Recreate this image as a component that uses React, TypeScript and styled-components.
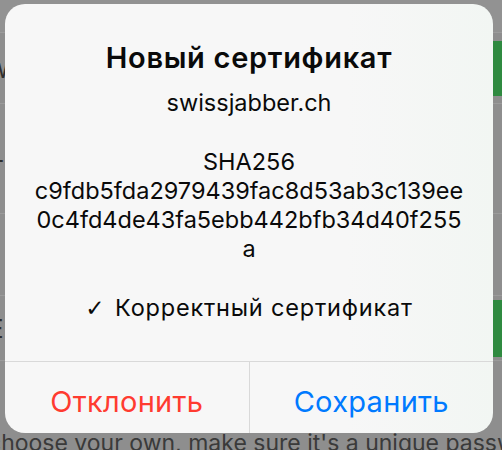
import styled, { createGlobalStyle } from "styled-components";

const GlobalStyle = createGlobalStyle`
  html, body {
    margin: 0;
    padding: 0;
  }
  body {
    width: 502px;
    height: 450px;
    overflow: hidden;
    font-family: Inter, "Liberation Sans", sans-serif;
  }
`;

const Screen = styled.div`
  position: relative;
  width: 502px;
  height: 450px;
  overflow: hidden;
  background: #8e8e8e;
`;

const Page = styled.div`
  display: flex;
  flex-direction: column;
`;

const Header = styled.div`
  height: 32px;
  background: #929292;
  border-bottom: 1px solid #9c9c9c;
`;

const Row = styled.div<{ $height: number }>`
  height: ${(p) => p.$height}px;
  display: flex;
  align-items: center;
  justify-content: space-between;
  border-bottom: 1px solid #9b9b9b;
  box-sizing: border-box;
`;

const Label = styled.span`
  margin-left: -12px;
  font-size: 26px;
  color: #2e2e2e;
`;

const GreenButton = styled.div<{ $height: number }>`
  width: 90px;
  height: ${(p) => p.$height}px;
  background: #2f8a40;
  flex-shrink: 0;
`;

const Footer = styled.div`
  display: flex;
  flex-direction: column;
  padding-top: 31px;
  font-size: 23px;
  line-height: 34px;
  color: #3a3a3a;
  white-space: nowrap;
`;

const FooterLine = styled.span`
  margin-left: -12px;
`;

const Overlay = styled.div`
  position: absolute;
  inset: 0;
  padding: 4px 9px 0 5px;
`;

const Alert = styled.div`
  width: 488px;
  height: 429px;
  border-radius: 20px;
  overflow: hidden;
  display: flex;
  flex-direction: column;
  background: linear-gradient(90deg, #f7f7f7 0%, #f7f7f7 70%, #f2f6f3 100%);
`;

const Body = styled.div`
  flex: 1;
  display: flex;
  flex-direction: column;
  align-items: center;
  padding-top: 36px;
  text-align: center;
  color: #0a0a0a;
`;

const Title = styled.div`
  font-size: 29px;
  font-weight: 600;
  line-height: 36px;
  letter-spacing: 0.7px;
`;

const Message = styled.div`
  margin-top: 12px;
  display: flex;
  flex-direction: column;
  font-size: 23.5px;
  line-height: 29.3px;
`;

const Line = styled.span<{ $spacing?: number }>`
  min-height: 29.3px;
  letter-spacing: ${(p) => p.$spacing ?? 0}px;
`;

const Check = styled.span`
  font-family: "DejaVu Sans", sans-serif;
  font-size: 23px;
  letter-spacing: 0;
  margin-right: 3px;
`;

const Actions = styled.div`
  height: 71px;
  display: flex;
  border-top: 1px solid #d9d9d9;
`;

const Action = styled.div<{ $color: string; $divider?: boolean }>`
  flex: 1;
  display: flex;
  align-items: center;
  justify-content: center;
  padding-top: 8px;
  font-size: 29px;
  letter-spacing: 0.3px;
  color: ${(p) => p.$color};
  border-left: ${(p) => (p.$divider ? "1px solid #d9d9d9" : "none")};
`;

export default function App() {
  return (
    <Screen>
      <GlobalStyle />
      <Page>
        <Header />
        <Row $height={71}>
          <Label>w</Label>
          <GreenButton $height={55} />
        </Row>
        <Row $height={110}>
          <Label>+</Label>
        </Row>
        <Row $height={82}>
          <Label>(</Label>
        </Row>
        <Row $height={65}>
          <Label>E</Label>
          <GreenButton $height={57} />
        </Row>
        <Footer>
          <FooterLine>a</FooterLine>
          <FooterLine>choose your own, make sure it's a unique password</FooterLine>
        </Footer>
      </Page>
      <Overlay>
        <Alert>
          <Body>
            <Title>Новый сертификат</Title>
            <Message>
              <Line>swissjabber.ch</Line>
              <Line />
              <Line>SHA256</Line>
              <Line>c9fdb5fda2979439fac8d53ab3c139ee</Line>
              <Line>0c4fd4de43fa5ebb442bfb34d40f255</Line>
              <Line>a</Line>
              <Line />
              <Line $spacing={0.8}>
                <Check>✓</Check> Корректный сертификат
              </Line>
            </Message>
          </Body>
          <Actions>
            <Action $color="#ff3b30">Отклонить</Action>
            <Action $color="#007aff" $divider>
              Сохранить
            </Action>
          </Actions>
        </Alert>
      </Overlay>
    </Screen>
  );
}
